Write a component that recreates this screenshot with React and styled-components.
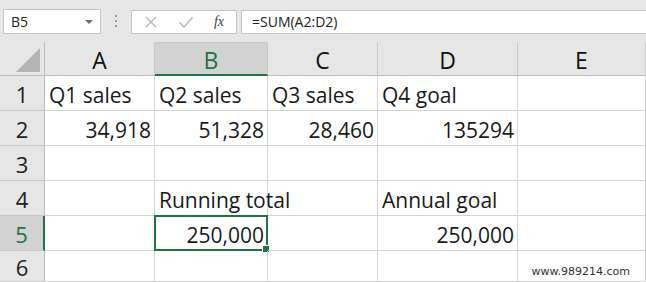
import React from "react";
import styled, { createGlobalStyle } from "styled-components";

const GlobalStyle = createGlobalStyle`
  html, body {
    margin: 0;
    padding: 0;
    background: #ffffff;
    overflow: hidden;
  }
  body {
    font-family: "Open Sans", "Liberation Sans", sans-serif;
  }
`;

const GREEN = "#217346";

const Page = styled.div`
  width: 646px;
  height: 282px;
  position: relative;
  overflow: hidden;
  background: #ffffff;
`;

const Toolbar = styled.div`
  display: flex;
  align-items: center;
  height: 42px;
  padding: 0 0 0 3px;
  background: #e6e6e6;
  box-sizing: border-box;
`;

const NameBox = styled.div`
  display: flex;
  align-items: center;
  justify-content: space-between;
  width: 98px;
  height: 25px;
  margin-top: 1px;
  padding: 0 7px 0 7px;
  box-sizing: border-box;
  background: #ffffff;
  border: 1px solid #c6c6c6;
  font-size: 14px;
  color: #222;
`;

const Caret = styled.span`
  width: 0;
  height: 0;
  border-left: 4px solid transparent;
  border-right: 4px solid transparent;
  border-top: 4px solid #6b6b6b;
`;

const Grip = styled.div`
  display: flex;
  flex-direction: column;
  gap: 3px;
  margin: 0 14px 0 14px;
  span {
    width: 2px;
    height: 2px;
    background: #9a9a9a;
  }
`;

const Buttons = styled.div`
  display: flex;
  align-items: center;
  justify-content: space-between;
  width: 106px;
  height: 24px;
  margin-top: 1px;
  padding: 0 12px 0 12px;
  box-sizing: border-box;
  background: #ffffff;
  border: 1px solid #c6c6c6;
`;

const Fx = styled.span`
  font-family: "Liberation Serif", serif;
  font-style: italic;
  font-size: 14px;
  color: #444;
`;

const Formula = styled.div`
  display: flex;
  align-items: center;
  flex: 1;
  height: 24px;
  margin: 1px 0 0 4px;
  padding: 0 10px;
  box-sizing: border-box;
  background: #ffffff;
  border: 1px solid #c6c6c6;
  border-right: none;
  font-size: 14px;
  color: #222;
`;

const Grid = styled.div`
  display: grid;
  grid-template-columns: 45px 110px 113px 110px 140px 1fr;
  grid-template-rows: 34px repeat(5, 35px) 31px;
`;

const Corner = styled.div`
  position: relative;
  background: #e6e6e6;
  border-right: 1px solid #bdbdbd;
  border-bottom: 1px solid #bdbdbd;
  box-sizing: border-box;
  &::after {
    content: "";
    position: absolute;
    right: 4px;
    bottom: 3px;
    width: 0;
    height: 0;
    border-left: 24px solid transparent;
    border-bottom: 24px solid #b4b4b4;
  }
`;

const ColHead = styled.div`
  display: flex;
  align-items: center;
  justify-content: center;
  padding-top: 2px;
  box-sizing: border-box;
  font-size: 23px;
  background: ${(p) => (p.$active ? "#d2d2d2" : "#e6e6e6")};
  color: ${(p) => (p.$active ? GREEN : "#111")};
  border-right: 1px solid #c8c8c8;
  border-top: 1px solid ${(p) => (p.$active ? "#c8c8c8" : "transparent")};
  border-bottom: ${(p) => (p.$active ? `2px solid ${GREEN}` : "1px solid #bdbdbd")};
`;

const RowHead = styled.div`
  display: flex;
  align-items: center;
  justify-content: center;
  padding-top: 2px;
  box-sizing: border-box;
  font-size: 22px;
  line-height: 1;
  background: ${(p) => (p.$active ? "#d2d2d2" : "#e6e6e6")};
  color: ${(p) => (p.$active ? GREEN : "#222")};
  border-bottom: 1px solid #c8c8c8;
  border-right: ${(p) => (p.$active ? `2px solid ${GREEN}` : "1px solid #bdbdbd")};
`;

const Cell = styled.div`
  position: relative;
  display: flex;
  align-items: flex-end;
  justify-content: ${(p) => (p.$num ? "flex-end" : "flex-start")};
  padding: 0 ${(p) => (p.$num ? "3px" : "0")} 0 ${(p) => (p.$num ? "0" : "4px")};
  box-sizing: border-box;
  font-size: 21px;
  line-height: 30px;
  color: #1a1a1a;
  white-space: nowrap;
  border-right: 1px solid #d4d4d4;
  border-bottom: 1px solid #d4d4d4;
`;

const Selection = styled.div`
  position: absolute;
  left: -1px;
  top: -1px;
  right: -1px;
  bottom: -1px;
  border: 2px solid ${GREEN};
  pointer-events: none;
  &::after {
    content: "";
    position: absolute;
    right: -4px;
    bottom: -4px;
    width: 6px;
    height: 6px;
    background: ${GREEN};
    border: 1px solid #ffffff;
  }
`;

const Watermark = styled.div`
  position: absolute;
  right: 16px;
  bottom: 4px;
  font-family: "DejaVu Sans", sans-serif;
  font-size: 11px;
  color: #333;
`;

const columns = ["A", "B", "C", "D", "E"];

const rows = [
  [
    { v: "Q1 sales" },
    { v: "Q2 sales" },
    { v: "Q3 sales" },
    { v: "Q4 goal" },
    { v: "" },
  ],
  [
    { v: "34,918", num: true },
    { v: "51,328", num: true },
    { v: "28,460", num: true },
    { v: "135294", num: true },
    { v: "" },
  ],
  [{ v: "" }, { v: "" }, { v: "" }, { v: "" }, { v: "" }],
  [{ v: "" }, { v: "Running total" }, { v: "" }, { v: "Annual goal" }, { v: "" }],
  [
    { v: "" },
    { v: "250,000", num: true, sel: true },
    { v: "" },
    { v: "250,000", num: true },
    { v: "" },
  ],
  [{ v: "" }, { v: "" }, { v: "" }, { v: "" }, { v: "" }],
];

function Cross() {
  return (
    <svg width="14" height="14" viewBox="0 0 14 14">
      <path d="M2 2 L12 12 M12 2 L2 12" stroke="#b5b5b5" strokeWidth="1.4" fill="none" />
    </svg>
  );
}

function Check() {
  return (
    <svg width="16" height="14" viewBox="0 0 16 14">
      <path d="M1.5 7.5 L6 12 L14.5 2.5" stroke="#b5b5b5" strokeWidth="1.4" fill="none" />
    </svg>
  );
}

export default function App() {
  return (
    <Page>
      <GlobalStyle />
      <Toolbar>
        <NameBox>
          B5
          <Caret />
        </NameBox>
        <Grip>
          <span />
          <span />
          <span />
        </Grip>
        <Buttons>
          <Cross />
          <Check />
          <Fx>fx</Fx>
        </Buttons>
        <Formula>=SUM(A2:D2)</Formula>
      </Toolbar>
      <Grid>
        <Corner />
        {columns.map((c) => (
          <ColHead key={c} $active={c === "B"}>
            {c}
          </ColHead>
        ))}
        {rows.map((row, ri) => (
          <React.Fragment key={ri}>
            <RowHead $active={ri === 4}>{ri + 1}</RowHead>
            {row.map((cell, ci) => (
              <Cell key={ci} $num={cell.num}>
                {cell.v}
                {cell.sel && <Selection />}
              </Cell>
            ))}
          </React.Fragment>
        ))}
      </Grid>
      <Watermark>www.989214.com</Watermark>
    </Page>
  );
}
